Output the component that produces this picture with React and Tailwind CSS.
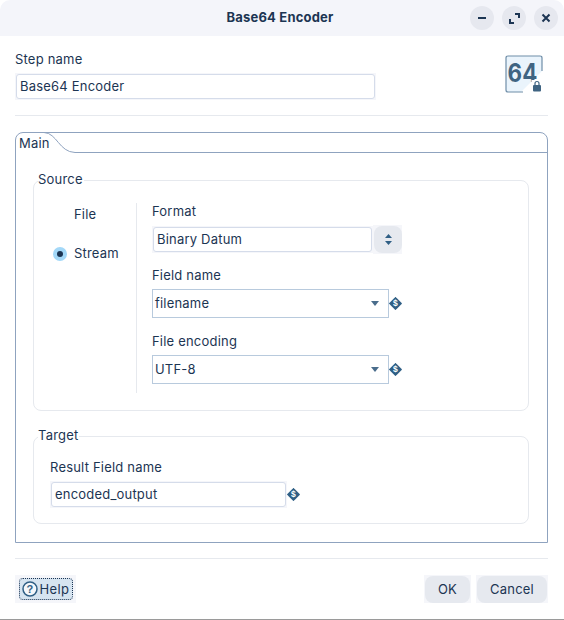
import React from "react";

const ink = "text-[#1c3553]";

// diamond variable marker
const VarIcon = () => (
  <svg width="13" height="13" viewBox="0 0 13 13" className="shrink-0">
    <path d="M6.5 0.3 L12.7 6.5 L6.5 12.7 L0.3 6.5 Z" fill="#2f5f85" stroke="#2f5f85" strokeLinejoin="round" />
    <text x="6.5" y="9.4" textAnchor="middle" fontSize="8.5" fontWeight="700" fill="#fff" fontFamily="Liberation Sans, sans-serif">$</text>
  </svg>
);

const Caret = () => (
  <svg width="8" height="5" viewBox="0 0 8 5" className="shrink-0">
    <path d="M0 0 H8 L4 5 Z" fill="#4a6d8c" />
  </svg>
);

const TextField = ({ value, className }) => (
  <div className={`h-[27px] p-px bg-[#f5f6fa] ${className}`}>
    <div className="h-full rounded-[3px] border border-[#d5dcea] bg-white pl-[3px] flex items-center">{value}</div>
  </div>
);

const Combo = ({ value }) => (
  <div className="flex items-center">
    <div className="w-[237px] h-[29px] border border-[#b8cadd] bg-white pl-[2px] pr-[9px] flex items-center justify-between">
      <span>{value}</span>
      <Caret />
    </div>
    <VarIcon />
  </div>
);

const Group = ({ title, className, children }) => (
  <div className={`relative ml-[17px] mr-[18px] border border-[#e6e9ee] rounded-[8px] ${className}`}>
    <span className="absolute left-[4px] top-[-10px] bg-white pr-[1px] leading-[16px]">{title}</span>
    {children}
  </div>
);

export default function App() {
  return (
    <div className={`relative w-[564px] h-[620px] bg-white overflow-hidden text-[13px] tracking-[0.2px] ${ink} font-['Inter',sans-serif]`}>
      {/* title bar */}
      <div className="h-[36px] bg-[#f4f5fa] rounded-t-[10px] flex items-center justify-center relative pr-[4px]">
        <span className="font-bold">Base64 Encoder</span>
        <div className="absolute right-[6px] top-[6px] flex gap-[8px]">
          <button className="w-[24px] h-[24px] rounded-full bg-[#e6e8ef] flex items-center justify-center">
            <svg width="10" height="10" viewBox="0 0 10 10"><path d="M1 5 H9" stroke="#1c3553" strokeWidth="2" /></svg>
          </button>
          <button className="w-[24px] h-[24px] rounded-full bg-[#e6e8ef] flex items-center justify-center">
            <svg width="11" height="11" viewBox="0 0 11 11" fill="none"><path d="M6 1 H10 V5 M1 6 V10 H5" stroke="#1c3553" strokeWidth="2" /></svg>
          </button>
          <button className="w-[24px] h-[24px] rounded-full bg-[#e6e8ef] flex items-center justify-center">
            <svg width="10" height="10" viewBox="0 0 10 10"><path d="M1.5 1.5 L8.5 8.5 M8.5 1.5 L1.5 8.5" stroke="#1c3553" strokeWidth="2" /></svg>
          </button>
        </div>
      </div>

      {/* step name */}
      <div className="ml-[15px] mr-[16px] h-[80px] border-b border-[#e6e9ee] flex justify-between">
        <div>
          <div className="mt-[15px] leading-[16px]">Step name</div>
          <TextField value="Base64 Encoder" className="w-[361px] mt-[6px]" />
        </div>
        <svg width="38" height="38" viewBox="0 0 38 38" className="mt-[19px] mr-[5px]">
          <path d="M3 1 H35 Q37 1 37 3 V16 L16 37 H3 Q1 37 1 35 V3 Q1 1 3 1 Z" fill="#eaf4fc" />
          <path d="M37 16 V3 Q37 1 35 1 H3 Q1 1 1 3 V35 Q1 37 3 37 H18" fill="none" stroke="#6f8ea8" strokeWidth="1.2" />
          <text x="2.5" y="27" fontSize="26" fontWeight="700" textLength="30" lengthAdjust="spacingAndGlyphs" fill="#3f6482" fontFamily="Inter, sans-serif">64</text>
          <rect x="26.5" y="25" width="11" height="13" fill="#fff" />
          <rect x="28" y="30" width="8" height="6.5" rx="1" fill="#3f6482" />
          <path d="M30 30 V28.5 a2 2 0 0 1 4 0 V30" fill="none" stroke="#3f6482" strokeWidth="1.2" />
        </svg>
      </div>

      {/* tab panel */}
      <div className="relative ml-[15px] mr-[16px] mt-[16px] h-[411px] border border-[#8fa3bf] rounded-t-[8px]">
        <svg width="62" height="22" viewBox="0 0 62 22" fill="none" className="absolute left-[-1px] top-[-1px]">
          <path d="M29 0.5 C42 1 44 20 60 20.5" stroke="#8fa3bf" />
        </svg>
        <span className="absolute left-[3px] top-[2px] leading-[16px]">Main</span>
        <div className="h-[20px] ml-[59px] border-b border-[#8fa3bf]" />

        <Group title="Source" className="mt-[27px] h-[231px] flex">
          <div className="w-[103px] h-[190px] mt-[22px] border-r border-[#e6e9ee] relative">
            <span className="absolute left-[40px] top-[3px] leading-[16px]">File</span>
            <span className="absolute left-[19px] top-[44px] w-[14px] h-[14px] rounded-full bg-[#a3d8f8] flex items-center justify-center">
              <span className="w-[6px] h-[6px] rounded-full bg-[#1c3553]" />
            </span>
            <span className="absolute left-[40px] top-[42px] leading-[16px]">Stream</span>
          </div>
          <div className="ml-[15px] pt-[22px]">
            <div className="leading-[16px]">Format</div>
            <div className="flex mt-[7px] items-start">
              <TextField value="Binary Datum" className="w-[221px]" />
              <div className="w-[29px] h-[29px] -mt-px pl-px py-px bg-[#f5f6fa]">
                <div className="h-full rounded-[8px] bg-[#e6e9ef] flex flex-col items-center justify-center gap-[3px]">
                  <svg width="7" height="4" viewBox="0 0 7 4"><path d="M0 4 L3.5 0 L7 4 Z" fill="#2f5f85" /></svg>
                  <svg width="7" height="4" viewBox="0 0 7 4"><path d="M0 0 H7 L3.5 4 Z" fill="#2f5f85" /></svg>
                </div>
              </div>
            </div>
            <div className="leading-[16px] mt-[13px]">Field name</div>
            <div className="mt-[6px]"><Combo value="filename" /></div>
            <div className="leading-[16px] mt-[15px]">File encoding</div>
            <div className="mt-[6px]"><Combo value="UTF-8" /></div>
          </div>
        </Group>

        <Group title="Target" className="mt-[25px] h-[88px] pl-[16px]">
          <div className="leading-[16px] mt-[22px]">Result Field name</div>
          <div className="flex items-center mt-[6px]">
            <TextField value="encoded_output" className="w-[237px]" />
            <VarIcon />
          </div>
        </Group>
      </div>

      {/* footer */}
      <div className="ml-[15px] mr-[16px] mt-[15px] border-t border-[#e6e9ee] pt-[16px] flex justify-between">
        <div className="w-[61px] h-[28px] bg-[#f5f6fa] flex items-center justify-center">
          <button className="w-[54px] h-[22px] rounded-[4px] bg-[#d6e4f0] border border-dotted border-[#1c3553] flex items-center justify-center gap-[2px]">
            <svg width="16" height="16" viewBox="0 0 16 16" fill="none">
              <circle cx="8" cy="8" r="7" stroke="#2f5f85" strokeWidth="1.5" fill="#f4f7fb" />
              <text x="8" y="12" textAnchor="middle" fontSize="11" fontWeight="700" fill="#2f5f85" fontFamily="Liberation Sans, sans-serif">?</text>
            </svg>
            <span className="pt-px tracking-[0.4px]">Help</span>
          </button>
        </div>
        <div className="flex gap-[5px]">
          <div className="w-[47px] h-[28px] pt-px px-px bg-[#f5f6fa]">
            <button className="w-full h-[27px] rounded-[8px] bg-[#e6e9ef]">OK</button>
          </div>
          <div className="w-[72px] h-[28px] pt-px px-px bg-[#f5f6fa]">
            <button className="w-full h-[27px] rounded-[8px] bg-[#e6e9ef]">Cancel</button>
          </div>
        </div>
      </div>
      <div className="absolute left-0 right-0 bottom-0 h-px bg-[#9a9a9a]" />
    </div>
  );
}
